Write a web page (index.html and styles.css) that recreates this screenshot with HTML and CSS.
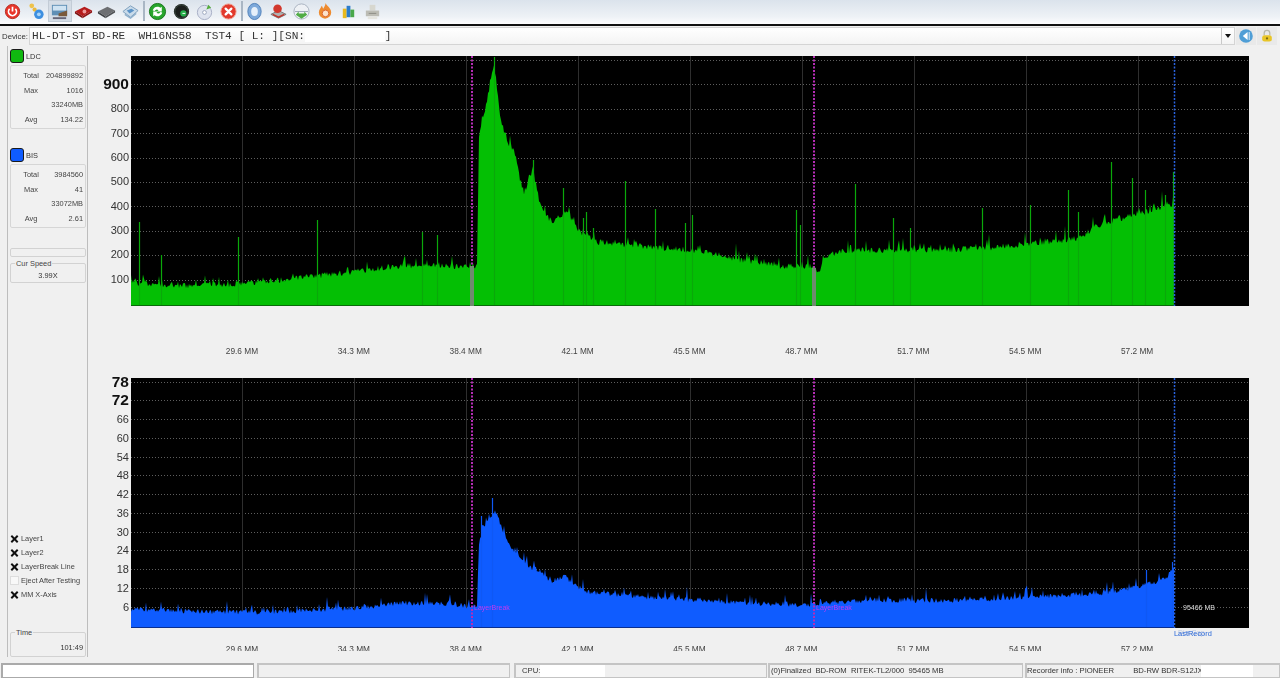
FILE: index.html
```html
<!DOCTYPE html>
<html lang="en">
<head>
<meta charset="utf-8">
<title>Disc Quality Test</title>
<link rel="stylesheet" href="styles.css">
</head>
<body>
<div class="app">
  <header class="toolbar">
    <div class="tool-group">
      <span class="tool"><svg viewBox="0 0 20 20"><circle cx="10" cy="10" r="7.5" fill="#e8352a"/><circle cx="10" cy="10" r="7.5" fill="none" stroke="#b32a20"/><path d="M7 7.2a4.2 4.2 0 1 0 6 0" fill="none" stroke="#fff" stroke-width="1.8"/><path d="M10 5v5" stroke="#fff" stroke-width="1.8"/></svg></span>
      <span class="tool"><svg viewBox="0 0 20 20"><circle cx="5" cy="4" r="2.5" fill="#eec24a"/><circle cx="8" cy="8" r="2.2" fill="#e8b93e"/><circle cx="12.5" cy="13" r="5" fill="#3d8fe0"/><circle cx="12.5" cy="13" r="2" fill="#a8d4f7"/></svg></span>
      <span class="tool tool-on"><svg viewBox="0 0 20 20"><rect x="2" y="3" width="16" height="11" fill="#5f8fb5"/><rect x="3" y="4" width="14" height="5" fill="#cfe3f2"/><path d="M9 12l9-3v6H9z" fill="#7a5a3a"/><path d="M3 16h14v2H3z" fill="#667"/></svg></span>
      <span class="tool"><svg viewBox="0 0 20 20"><path d="M1 10l10-5 8 4-10 6z" fill="#b51c1c"/><path d="M1 10l8 5v2l-8-5z" fill="#7d1010"/><path d="M9 15l10-6v2L9 17z" fill="#8e1414"/><circle cx="11" cy="10" r="2" fill="#eb9a9a"/></svg></span>
      <span class="tool"><svg viewBox="0 0 20 20"><path d="M1 10l10-5 8 4-10 6z" fill="#6d6f72"/><path d="M1 10l8 5v2l-8-5z" fill="#3f4144"/><path d="M9 15l10-6v2L9 17z" fill="#505255"/></svg></span>
      <span class="tool"><svg viewBox="0 0 20 20"><path d="M2 10l8-6 8 5-8 7z" fill="#c9dbea" stroke="#7d9fbd"/><path d="M6 9l5-2 3 2-5 3z" fill="#5b93c7"/><path d="M4 13l6 4 6-5" fill="none" stroke="#8fb0cc" stroke-width="1.5"/></svg></span>
    </div>
    <i class="tool-sep"></i>
    <div class="tool-group">
      <span class="tool"><svg viewBox="0 0 20 20"><circle cx="10" cy="10" r="8.5" fill="#27a52c" stroke="#16741a"/><path d="M5 9a5 5 0 0 1 8-3l1.5-1v5h-5l1.600-1.400A2.800 2.800 0 0 0 7 9.500z" fill="#fff"/><path d="M15 11a5 5 0 0 1-8 3l-1.500 1v-5h5L8.900 11.400A2.800 2.800 0 0 0 13 10.500z" fill="#fff"/></svg></span>
      <span class="tool"><svg viewBox="0 0 20 20"><circle cx="10" cy="10" r="8" fill="#1c1f1d"/><circle cx="10" cy="10" r="7" fill="none" stroke="#3b4a40"/><circle cx="12" cy="12" r="3.300" fill="#25b04a"/><path d="M11 12h3" stroke="#fff"/></svg></span>
      <span class="tool"><svg viewBox="0 0 20 20"><circle cx="10" cy="11" r="7.500" fill="#dfe4ef" stroke="#a5adc4"/><circle cx="10" cy="11" r="2" fill="#fff" stroke="#9aa5bd"/><path d="M12 8l2-5 3 3z" fill="#53ad3a"/></svg></span>
      <span class="tool"><svg viewBox="0 0 20 20"><circle cx="10" cy="10" r="8" fill="#e2392c" stroke="#f0a090"/><path d="M7 7l6 6M13 7l-6 6" stroke="#fff" stroke-width="2.400" stroke-linecap="round"/></svg></span>
    </div>
    <i class="tool-sep tool-sep-b"></i>
    <div class="tool-group">
      <span class="tool"><svg viewBox="0 0 20 20"><ellipse cx="10" cy="10" rx="7" ry="8.500" fill="#7da9da" stroke="#4f7fb8"/><ellipse cx="10" cy="10" rx="3.500" ry="4.800" fill="#e6f0fa"/></svg></span>
      <span class="tool"><svg viewBox="0 0 20 20"><path d="M2 13l8-4 8 4-8 4z" fill="#b0b0b0" stroke="#777"/><circle cx="9" cy="7" r="4.500" fill="#d2382d"/><path d="M4 13l6 3 6-3" fill="none" stroke="#c0342a" stroke-width="1.500"/></svg></span>
      <span class="tool"><svg viewBox="0 0 20 20"><circle cx="10" cy="10" r="8" fill="#eef1f5" stroke="#a8b1bf"/><path d="M3 10h14" stroke="#9aa5b5"/><path d="M7 12h6v-2l3 3.500-6 4-6-4 3-3.500z" fill="#50ac45"/></svg></span>
      <span class="tool"><svg viewBox="0 0 20 20"><path d="M10 1c1 3 6 5 6 10a6.500 6.500 0 0 1-13 0c0-3 2-4 3-7 1 1 1 2 1.500 3C9 5 10 3 10 1z" fill="#ee8b2f"/><circle cx="10" cy="12" r="3.500" fill="#fbe3cc" stroke="#d9602a"/></svg></span>
      <span class="tool"><svg viewBox="0 0 20 20"><rect x="4" y="7" width="4" height="10" fill="#e8b91f"/><rect x="8" y="4" width="4" height="12" fill="#2b7ccb"/><rect x="12" y="8" width="4" height="8" fill="#49a84a"/></svg></span>
      <span class="tool"><svg viewBox="0 0 20 20"><path d="M7 3h6v6H7z" fill="#d7d7cf"/><path d="M3 9h14v6H3z" fill="#bcbcb4"/><path d="M5 15h10v3H5z" fill="#e5e5df"/><path d="M6 12h8" stroke="#8c8c84"/></svg></span>
    </div>
  </header>

  <div class="devicebar">
    <span class="device-label">Device:</span>
    <div class="device-field">
      <span class="device-text">HL-DT-ST BD-RE  WH16NS58  TST4 [ L: ][SN:<span class="masked">            </span>]</span>
      <span class="device-drop"><i></i></span>
    </div>
    <span class="mini"><svg viewBox="0 0 20 20"><circle cx="10" cy="10" r="8.500" fill="#4f9ed6"/><path d="M12 5v10l-6-5z" fill="#fff"/><path d="M14 5v10" stroke="#fff"/></svg></span>
    <span class="mini"><svg viewBox="0 0 20 20"><path d="M6.500 9V6.500a3.500 3.500 0 0 1 7 0V9" fill="none" stroke="#b8b8a8" stroke-width="1.600"/><rect x="4" y="9" width="12" height="8" rx="3" fill="#e8c527"/><circle cx="10" cy="13" r="1.400" fill="#7d6a10"/></svg></span>
  </div>

  <main class="main">
    <aside class="sidebar">
      <div class="legend-head"><i class="swatch swatch-green"></i><span>LDC</span></div>
      <dl class="stats">
        <div><dt>Total</dt><dd>204899892</dd></div>
        <div><dt>Max</dt><dd>1016</dd></div>
        <div><dt></dt><dd>33240MB</dd></div>
        <div><dt>Avg</dt><dd>134.22</dd></div>
      </dl>
      <div class="legend-head legend-second"><i class="swatch swatch-blue"></i><span>BIS</span></div>
      <dl class="stats">
        <div><dt>Total</dt><dd>3984560</dd></div>
        <div><dt>Max</dt><dd>41</dd></div>
        <div><dt></dt><dd>33072MB</dd></div>
        <div><dt>Avg</dt><dd>2.61</dd></div>
      </dl>
      <div class="emptybox"></div>
      <div class="box box-speed"><span class="box-title">Cur Speed</span><p>3.99X</p></div>
      <ul class="checks">
        <li><i class="check on"></i>Layer1</li>
        <li><i class="check on"></i>Layer2</li>
        <li><i class="check on"></i>LayerBreak Line</li>
        <li><i class="check"></i>Eject After Testing</li>
        <li><i class="check on"></i>MM X-Axis</li>
      </ul>
      <div class="box box-time"><span class="box-title">Time</span><p>101:49</p></div>
    </aside>

    <section class="charts">
      <div class="chart chart-ldc">
        <ol class="yaxis">
          <li class="big">900</li><li>800</li><li>700</li><li>600</li><li>500</li><li>400</li><li>300</li><li>200</li><li>100</li>
        </ol>
        <div class="plot"><svg id="ldc" class="plot-svg" viewBox="0 0 1118 250"></svg></div>
      </div>
      <ol class="xaxis xaxis-ldc">
        <li>29.6 MM</li><li>34.3 MM</li><li>38.4 MM</li><li>42.1 MM</li><li>45.5 MM</li><li>48.7 MM</li><li>51.7 MM</li><li>54.5 MM</li><li>57.2 MM</li>
      </ol>
      <div class="chart chart-bis">
        <ol class="yaxis">
          <li class="big">78</li><li class="big">72</li><li>66</li><li>60</li><li>54</li><li>48</li><li>42</li><li>36</li><li>30</li><li>24</li><li>18</li><li>12</li><li>6</li>
        </ol>
        <div class="plot">
          <svg id="bis" class="plot-svg" viewBox="0 0 1118 250"></svg>
          <span class="tag tag-break1">LayerBreak</span>
          <span class="tag tag-break2">LayerBreak</span>
          <span class="tag tag-size">95466 MB</span>
          <span class="tag tag-cap">DiscCap</span>
          <span class="tag tag-last">LastRecord</span>
        </div>
      </div>
      <ol class="xaxis xaxis-bis">
        <li>29.6 MM</li><li>34.3 MM</li><li>38.4 MM</li><li>42.1 MM</li><li>45.5 MM</li><li>48.7 MM</li><li>51.7 MM</li><li>54.5 MM</li><li>57.2 MM</li>
      </ol>
    </section>
  </main>

  <footer class="status">
    <div class="cell cell-input"></div>
    <div class="cell cell-blank"></div>
    <div class="cell cell-cpu">CPU:<span class="patch patch-cpu"></span></div>
    <div class="cell cell-disc">(0)Finalized&nbsp;&nbsp;BD-ROM&nbsp;&nbsp;RITEK-TL2/000&nbsp;&nbsp;95465 MB</div>
    <div class="cell cell-rec">Recorder info : PIONEER<span class="rec-gap"></span>BD-RW&nbsp;BDR-S12JX<span class="patch patch-rec"></span></div>
  </footer>
</div>
<script src="chart.js"></script>
</body>
</html>
```
FILE: styles.css
```css
* { box-sizing: border-box; }
html, body { margin: 0; padding: 0; }
body {
  width: 1280px; height: 678px; overflow: hidden;
  background: #f0f0f0; color: #333;
  font-family: "Liberation Sans", Arial, sans-serif; font-size: 7.400px;
}
ol, ul, dl, dd, p { margin: 0; padding: 0; list-style: none; }
.app { display: flex; flex-direction: column; height: 678px; filter: blur(0.35px); }

/* toolbar */
.toolbar {
  display: flex; align-items: center; height: 26px; padding: 0 0 2px 1px;
  background: linear-gradient(#dbe3ec, #eef2f6 70%, #fdfdfe);
  border-bottom: 2px solid #111;
}
.tool-group { display: flex; }
.tool { width: 23.500px; height: 22px; display: flex; align-items: center; justify-content: center; }
.tool svg { width: 19px; height: 19px; display: block; }
.tool-on { background: #d5dde6; border: 1px solid #c3ccd6; }
.tool-sep { width: 2px; height: 20px; margin: 0 1px 0 1px; background: #a9b6c4; }
.tool-sep-b { margin: 0 0 0 1px; }

/* device bar */
.devicebar { display: flex; align-items: center; height: 20px; padding-left: 2px; }
.device-label { width: 27px; font-size: 7.800px; color: #333; white-space: nowrap; }
.device-field {
  display: flex; align-items: center; justify-content: space-between;
  width: 1206px; height: 18px; padding-left: 2px;
  border: 1px solid #d4d4d4;
  background: linear-gradient(#fff, #f4f4f4);
}
.device-text { font-family: "Liberation Mono", monospace; font-size: 11.100px; white-space: pre; color: #333; }
.masked { background: #fff; }
.device-drop { width: 13px; height: 16px; display: flex; align-items: center; justify-content: center; border-left: 1px solid #c9c9c9; }
.device-drop i { border: 3.500px solid transparent; border-top: 4px solid #111; border-bottom: 0; }
.mini { width: 20px; height: 18px; margin-left: 1px; display: flex; align-items: center; justify-content: center; background: #e9e9e9; }
.mini svg { width: 16px; height: 16px; display: block; }
.mini:first-of-type { margin-left: 2px; }

/* main */
.main { display: flex; height: 611px; flex: none; }
.sidebar {
  display: flex; flex-direction: column;
  width: 81px; margin-left: 7px; padding: 3px 1px 0 2px;
  border-left: 1px solid #bdbdbd; border-right: 1px solid #bdbdbd;
}
.legend-head { display: flex; align-items: center; height: 14px; }
.legend-second { margin-top: 19px; }
.swatch { width: 14px; height: 14px; margin-right: 2px; border: 1.500px solid #1a1a1a; border-radius: 3px; }
.swatch-green { background: #10b810; }
.swatch-blue { background: #0f5cff; }
.stats {
  height: 65px; margin-top: 2px; padding-top: 3px;
  border: 1px solid #d6d6d6; border-radius: 2px; background: #f1f1f1;
}
.stats div { display: flex; justify-content: space-between; height: 14.600px; line-height: 14.600px; padding: 0 2px 0 10px; }
.stats dt { width: 20px; text-align: center; color: #444; }
.stats dd { color: #444; }
.emptybox { height: 9px; margin-top: 20px; border: 1px solid #d2d2d2; border-radius: 2px; }
.box { position: relative; border: 1px solid #d2d2d2; border-radius: 2px; }
.box-title { position: absolute; left: 4px; top: -5px; padding: 0 1px; background: #f0f0f0; line-height: 10px; color: #444; }
.box-speed { height: 20px; margin-top: 6px; padding-top: 7px; text-align: center; line-height: 10px; }
.checks { margin-top: 248px; }
.checks li { display: flex; align-items: center; height: 14px; color: #444; white-space: nowrap; }
.check { position: relative; width: 9px; height: 9px; margin-right: 2px; background: #f8f8f8; border: 1px solid #ddd; }
.check.on { border-color: transparent; background: transparent; }
.check.on::before, .check.on::after {
  content: ""; position: absolute; left: -1px; top: 3px; width: 9px; height: 2px; background: #111;
}
.check.on::before { transform: rotate(45deg); }
.check.on::after { transform: rotate(-45deg); }
.box-time { height: 25px; margin-top: 31px; padding: 10px 2px 0 0; text-align: right; line-height: 10px; }

/* charts */
.charts { width: 1192px; padding-top: 10px; }
.chart { display: flex; height: 250px; }
.yaxis { width: 43px; padding-right: 2px; text-align: right; color: #333; font-size: 11px; }
.chart-ldc .yaxis { padding-top: 15.800px; }
.chart-ldc .yaxis li { height: 24.375px; line-height: 24.375px; }
.chart-bis .yaxis { margin-top: -5.400px; }
.chart-bis .yaxis li { height: 18.750px; line-height: 18.750px; }
.yaxis .big { font-size: 15.500px; font-weight: 700; color: #111; }
.plot { position: relative; width: 1118px; height: 250px; background: #000; }
.plot-svg { display: block; width: 1118px; height: 250px; }
.xaxis { display: grid; grid-template-columns: repeat(9, 111.900px); padding-left: 98px; font-size: 8.300px; color: #444; }
.xaxis li { text-align: center; white-space: nowrap; }
.xaxis-ldc { height: 72px; padding-top: 40px; }
.xaxis-bis { height: 23px; padding-top: 16px; overflow: hidden; }
.tag { position: absolute; font-size: 7px; line-height: 10px; white-space: nowrap; }
.tag-break1 { left: 343px; top: 225px; color: #c23cf0; }
.tag-break2 { left: 685px; top: 225px; color: #c23cf0; }
.tag-size { left: 1052px; top: 225px; color: #ddd; }
.tag-cap { left: 1047px; top: 250px; color: #b9c6e2; }
.tag-last { left: 1043px; top: 251px; font-size: 7.400px; color: #2a68d8; }

/* status */
.status { display: flex; height: 15px; margin-top: 6px; padding-left: 1px; font-size: 7.700px; line-height: 11px; }
.cell { position: relative; height: 15px; border: 2px solid #c4c4c4; border-bottom-width: 1px; border-right-width: 1px; white-space: nowrap; color: #333; }
.cell-input { width: 253px; background: #fff; border-color: #aaa; }
.cell-blank { width: 253px; margin-left: 3px; }
.cell-cpu { width: 253px; margin-left: 4px; padding-left: 6px; }
.cell-disc { width: 255px; margin-left: 1px; padding-left: 1px; }
.cell-rec { flex: 1; margin-left: 2px; padding-left: 0; }
.rec-gap { display: inline-block; width: 19px; }
.patch { position: absolute; top: 0; height: 12px; background: #fff; }
.patch-cpu { left: 24px; width: 65px; }
.patch-rec { left: 174px; width: 52px; }
```
FILE: chart.js
```js
(function () {
  var NS = 'http://www.w3.org/2000/svg';
  var seed = 12345;
  function rand() {
    seed = (seed * 1664525 + 1013904223) % 4294967296;
    return seed / 4294967296;
  }
  function el(svg, name, attrs) {
    var n = document.createElementNS(NS, name);
    for (var k in attrs) n.setAttribute(k, attrs[k]);
    svg.appendChild(n);
    return n;
  }
  function envelope(points, x) {
    for (var i = 1; i < points.length; i++) {
      if (x <= points[i][0]) {
        var a = points[i - 1], b = points[i];
        return a[1] + (b[1] - a[1]) * (x - a[0]) / (b[0] - a[0]);
      }
    }
    return points[points.length - 1][1];
  }
  function draw(cfg) {
    var svg = document.getElementById(cfg.id);
    var top = cfg.top, i;
    cfg.grid.forEach(function (y) {
      el(svg, 'line', { x1: 0, x2: 1118, y1: y - top + 0.5, y2: y - top + 0.5, stroke: '#5e5e5e', 'stroke-width': 1, 'stroke-dasharray': '1 2' });
    });
    for (i = 0; i < 9; i++) {
      var vx = Math.round(242.3 + i * 111.9 - 131) + 0.5;
      el(svg, 'line', { x1: vx, x2: vx, y1: 0, y2: 250, stroke: '#2e2e2e', 'stroke-width': 1 });
    }
    var d = 'M0 250';
    for (var x = 0; x <= 1043; x += 1) {
      var base = envelope(cfg.env, x + 131);
      var y = base - top + rand() * cfg.amp;
      var r = rand();
      if (r < 0.12) y -= rand() * cfg.amp * 1.3;
      else if (r < 0.16) y -= rand() * cfg.amp * 2.4;
      d += 'L' + x + ' ' + Math.min(y, 249).toFixed(1);
    }
    d += 'L1043 250Z';
    el(svg, 'path', { d: d, fill: cfg.fill });
    cfg.spikes.forEach(function (s) {
      el(svg, 'line', { x1: s[0] - 131 + 0.5, x2: s[0] - 131 + 0.5, y1: s[1] - top, y2: 249, stroke: cfg.spike, 'stroke-width': 1.2 });
    });
    el(svg, 'line', { x1: 0, x2: 1043, y1: 249.5, y2: 249.5, stroke: cfg.edge, 'stroke-width': 1 });
    [472, 814].forEach(function (m) {
      el(svg, 'line', { x1: m - 131, x2: m - 131, y1: 0, y2: 250, stroke: '#b52db5', 'stroke-width': 2, 'stroke-dasharray': '2 1.500' });
    });
    (cfg.bands || []).forEach(function (b) {
      el(svg, 'rect', { x: b[0] - 131, y: b[1] - top, width: 4, height: 250 - (b[1] - top), fill: '#708a70' });
    });
    el(svg, 'line', { x1: 1043.5, x2: 1043.5, y1: 0, y2: 250, stroke: '#2a63e0', 'stroke-width': 1.500, 'stroke-dasharray': '2 1.500' });
  }
  var ldcGrid = [], bisGrid = [], i;
  for (i = -1; i < 9; i++) ldcGrid.push(Math.round(84.3 + i * 24.4));
  for (i = 0; i < 13; i++) bisGrid.push(Math.round(381.5 + i * 18.75));

  draw({
    id: 'ldc', top: 56, amp: 6, fill: '#04bf04', spike: '#0aa80a', edge: '#0a6a0a',
    grid: ldcGrid,
    bands: [[470, 266], [812, 268]],
    env: [[131, 279], [175, 283], [240, 281], [300, 275], [350, 269], [400, 263], [440, 262], [471, 265], [477, 262], [479, 133], [485, 108], [490, 80], [494, 60], [500, 112], [507, 138], [514, 148], [520, 176], [524, 190], [533, 166], [540, 201], [552, 220], [567, 208], [577, 227], [597, 239], [640, 243], [700, 248], [740, 257], [780, 263], [812, 263], [820, 270], [825, 252], [860, 247], [950, 247], [1000, 244], [1030, 240], [1060, 238], [1080, 235], [1100, 222], [1130, 213], [1150, 208], [1172, 201], [1174, 201]],
    spikes: [[139, 222], [161, 255], [238, 237], [317, 220], [422, 232], [437, 235], [494, 57], [533, 160], [563, 188], [583, 218], [586, 212], [593, 228], [625, 181], [655, 209], [685, 223], [692, 215], [796, 210], [800, 225], [855, 184], [893, 218], [910, 228], [982, 208], [1030, 205], [1068, 190], [1078, 212], [1111, 162], [1132, 178], [1145, 190], [1165, 195], [1173, 172]]
  });
  draw({
    id: 'bis', top: 378, amp: 5, fill: '#0f5cff', spike: '#0f58f4', edge: '#0a2f90',
    grid: bisGrid,
    env: [[131, 607], [200, 609], [260, 610], [300, 608], [350, 606], [400, 601], [440, 601], [471, 604], [477, 603], [479, 540], [483, 524], [490, 517], [495, 507], [500, 521], [510, 545], [520, 555], [530, 565], [540, 568], [550, 579], [565, 574], [575, 583], [590, 590], [640, 594], [700, 598], [760, 601], [812, 603], [820, 601], [860, 598], [950, 598], [1000, 596], [1060, 593], [1100, 591], [1140, 584], [1165, 576], [1173, 566], [1174, 566]],
    spikes: [[492, 498], [481, 516], [1172, 562], [1146, 570]]
  });
})();
```
